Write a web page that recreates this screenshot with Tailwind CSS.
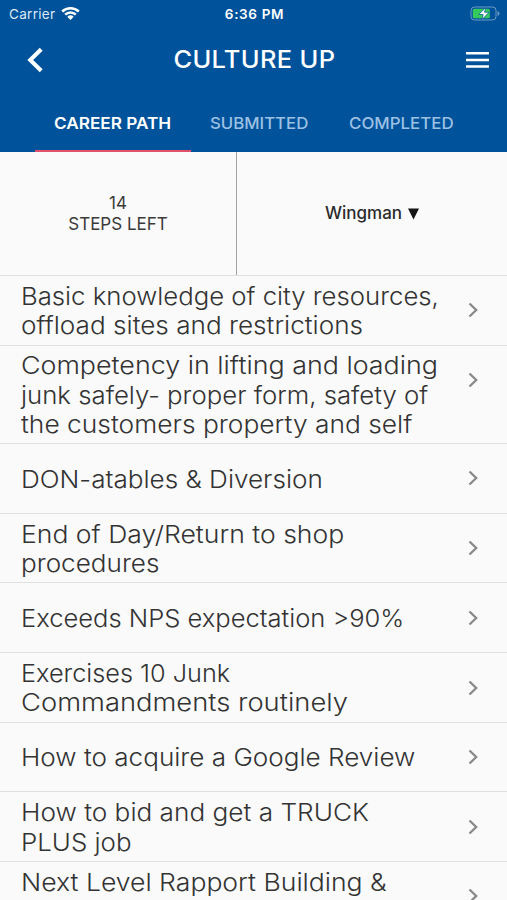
<!DOCTYPE html>
<html lang="en">
<head>
<meta charset="utf-8">
<title>Culture Up</title>
<script src="https://cdn.jsdelivr.net/npm/@tailwindcss/browser@4"></script>
</head>
<body class="bg-[#fafafa]">
<div class="w-[507px] h-[900px] overflow-hidden bg-[#fafafa] font-['Inter','Liberation_Sans',sans-serif] text-[#333]">
  <header class="h-[152px] bg-[#00539b] text-white flex flex-col">
    <div class="h-7 grid grid-cols-3 items-center pl-[9px] pr-[7px] text-[13px] leading-none">
      <div class="flex items-center gap-[6px] text-[#dce9f5]"><span class="tracking-[0.300px] text-[13.500px] pt-px">Carrier</span>
        <svg class="w-[19px] h-[15px] -mt-0.5" viewBox="0 0 19 15" fill="none" stroke="#fff" stroke-width="2.5"><path d="M1.2 5.5a12 12 0 0 1 16.6 0M4.2 8.7a7.6 7.6 0 0 1 10.6 0"/><path d="M6.3 10.8a4.7 4.7 0 0 1 6.4 0L9.500 14z" fill="#fff" stroke="none"/></svg>
      </div>
      <div class="text-center font-semibold text-[13.500px] tracking-[0.650px] whitespace-nowrap pt-px">6:36 PM</div>
      <svg class="w-[30px] h-[15px] -mt-[2px] justify-self-end" viewBox="0 0 30 15"><rect x="1" y="1" width="25" height="13" rx="3.500" fill="none" stroke="#6f9cc6"/><path d="M27.500 5v5q2-.8 2-2.500t-2-2.500z" fill="#6f9cc6"/><rect x="2.800" y="2.800" width="17" height="9.400" rx="1.500" fill="#35c95c"/><path d="M15.800 1.500 8.800 8.500h4.400l-1.200 5 7-7.200h-4.500z" fill="#fff" stroke="#00539b" stroke-width=".7"/></svg>
    </div>
    <div class="h-16 flex items-center justify-between pl-[27px] pr-[18px]">
      <svg class="w-4 h-[26px]" viewBox="0 0 16 26" fill="none" stroke="#fff" stroke-width="4"><path d="M14.200 2.200 3.200 13l11 10.800"/></svg>
      <h1 class="text-[24px] font-medium tracking-[0.3px] leading-none whitespace-nowrap scale-x-[1.06]">CULTURE UP</h1>
      <svg class="w-[23px] h-4" viewBox="0 0 23 16" fill="#fff"><path d="M0 0h23v2.500H0zM0 6.700h23v2.500H0zM0 13.200h23v2.500H0z"/></svg>
    </div>
    <nav class="flex-1 flex pl-[35px] text-[16px] leading-none whitespace-nowrap text-[#9dc1e4] font-medium">
      <div class="w-[156px] flex items-center justify-center border-b-[2px] border-[#e2506a] text-white font-semibold"><span class="pt-[3px] scale-x-[1.073]">CAREER PATH</span></div>
      <div class="w-[138px] pl-[19px] flex items-center border-b-[2px] border-transparent"><span class="pt-[3px] origin-left scale-x-[1.048]">SUBMITTED</span></div>
      <div class="pl-[20px] flex items-center border-b-[2px] border-transparent"><span class="pt-[3px] origin-left scale-x-[1.055]">COMPLETED</span></div>
    </nav>
  </header>
  <section class="h-[123px] flex text-[17px]">
    <div class="w-[237px] border-r border-[#a4a4a4] flex flex-col items-center justify-center leading-[21px] text-[#3a3a3a]"><span>14</span><span>STEPS LEFT</span></div>
    <div class="flex-1 flex items-center justify-center gap-[6px] font-medium text-[#2b2b2b]"><span>Wingman</span>
      <svg class="w-[11px] h-[12px]" viewBox="0 0 11 12"><path d="M0 .5h11L5.500 11.500z" fill="#151515"/></svg></div>
  </section>
  <ul class="text-[24px] leading-[29.3px] font-light whitespace-nowrap">
    <li class="h-[69.600px] border-t border-[#e0e0e0] flex justify-between pl-[21px] pr-[28px]"><div class="self-center pt-px"><p class="origin-left scale-x-[1.072]">Basic knowledge of city resources,</p><p class="w-fit origin-left scale-x-[1.089]">offload sites and restrictions</p></div><svg class="mt-[26px] w-[11px] h-4" viewBox="0 0 11 16" fill="none" stroke="#888" stroke-width="2.300"><path d="M1.500 1.500 8.200 8l-6.700 6.500"/></svg></li>
    <li class="h-[98.700px] border-t border-[#e0e0e0] flex justify-between pl-[21px] pr-[28px]"><div class="self-center pt-[1.500px]"><p class="origin-left scale-x-[1.118]">Competency in lifting and loading</p><p class="origin-left scale-x-[1.073]">junk safely- proper form, safety of</p><p class="origin-left scale-x-[1.098]">the customers property and self</p></div><svg class="mt-[26px] w-[11px] h-4" viewBox="0 0 11 16" fill="none" stroke="#888" stroke-width="2.300"><path d="M1.500 1.500 8.200 8l-6.700 6.500"/></svg></li>
    <li class="h-[69.600px] border-t border-[#e0e0e0] flex justify-between pl-[21px] pr-[28px]"><div class="self-center pt-[1.500px]"><p class="origin-left scale-x-[1.087]">DON-atables &amp; Diversion</p></div><svg class="mt-[26px] w-[11px] h-4" viewBox="0 0 11 16" fill="none" stroke="#888" stroke-width="2.300"><path d="M1.500 1.500 8.200 8l-6.700 6.500"/></svg></li>
    <li class="h-[69.600px] border-t border-[#e0e0e0] flex justify-between pl-[21px] pr-[28px]"><div class="self-center pt-[1.500px]"><p class="origin-left scale-x-[1.106]">End of Day/Return to shop</p><p class="origin-left scale-x-[1.087]">procedures</p></div><svg class="mt-[26px] w-[11px] h-4" viewBox="0 0 11 16" fill="none" stroke="#888" stroke-width="2.300"><path d="M1.500 1.500 8.200 8l-6.700 6.500"/></svg></li>
    <li class="h-[69.600px] border-t border-[#e0e0e0] flex justify-between pl-[21px] pr-[28px]"><div class="self-center pt-[2px]"><p class="origin-left scale-x-[1.064]">Exceeds NPS expectation &gt;90%</p></div><svg class="mt-[26.500px] w-[11px] h-4" viewBox="0 0 11 16" fill="none" stroke="#888" stroke-width="2.300"><path d="M1.500 1.500 8.200 8l-6.700 6.500"/></svg></li>
    <li class="h-[69.600px] border-t border-[#e0e0e0] flex justify-between pl-[21px] pr-[28px]"><div class="self-center pt-[2px]"><p class="origin-left scale-x-[1.053]">Exercises 10 Junk</p><p class="origin-left scale-x-[1.14]">Commandments routinely</p></div><svg class="mt-[26.500px] w-[11px] h-4" viewBox="0 0 11 16" fill="none" stroke="#888" stroke-width="2.300"><path d="M1.500 1.500 8.200 8l-6.700 6.500"/></svg></li>
    <li class="h-[69.600px] border-t border-[#e0e0e0] flex justify-between pl-[21px] pr-[28px]"><div class="self-center pt-[2px]"><p class="origin-left scale-x-[1.087]">How to acquire a Google Review</p></div><svg class="mt-[26.500px] w-[11px] h-4" viewBox="0 0 11 16" fill="none" stroke="#888" stroke-width="2.300"><path d="M1.500 1.500 8.200 8l-6.700 6.500"/></svg></li>
    <li class="h-[69.600px] border-t border-[#e0e0e0] flex justify-between pl-[21px] pr-[28px]"><div class="self-center pt-[2px]"><p class="origin-left scale-x-[1.091]">How to bid and get a TRUCK</p><p class="origin-left scale-x-[1.078]">PLUS job</p></div><svg class="mt-[26.500px] w-[11px] h-4" viewBox="0 0 11 16" fill="none" stroke="#888" stroke-width="2.300"><path d="M1.500 1.500 8.200 8l-6.700 6.500"/></svg></li>
    <li class="h-[69.600px] border-t border-[#e0e0e0] flex justify-between pl-[21px] pr-[28px]"><div class="mt-[6px]"><p class="origin-left scale-x-[1.107]">Next Level Rapport Building &amp;</p></div><svg class="mt-[26.500px] w-[11px] h-4" viewBox="0 0 11 16" fill="none" stroke="#888" stroke-width="2.300"><path d="M1.500 1.500 8.200 8l-6.700 6.500"/></svg></li>
  </ul>
</div>
</body>
</html>
